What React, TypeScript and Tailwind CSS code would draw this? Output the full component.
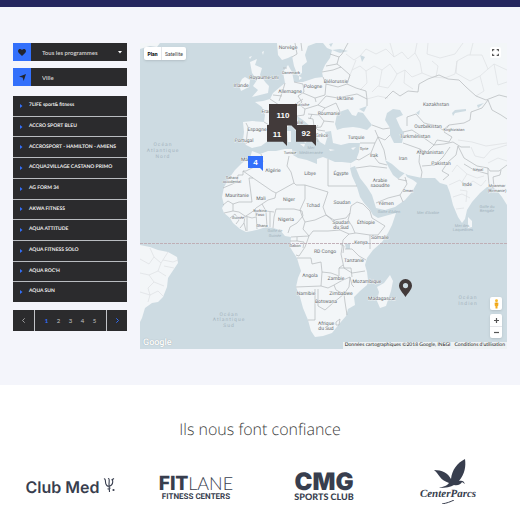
import type { ReactNode } from "react";

const clubs = [
  "7LIFE sport& fitness",
  "ACCRO SPORT BLEU",
  "ACCROSPORT - HAMILTON - AMIENS",
  "ACQUA2VILLAGE CASTANO PRIMO",
  "AG FORM 34",
  "AKWA FITNESS",
  "AQUA ATTITUDE",
  "AQUA FITNESS SOLO",
  "AQUA ROC'H",
  "AQUA SUN",
];

const MAP = { x: 140, y: 43, w: 367, h: 306 };

const land = [
  // Africa
  "M252 151 250 158 242 163 235 170 230 177 224 187 222 197 224 205 222 208 224 213 230 218 233 223 240 229 246 232 252 231 260 229 266 227 273 228 280 230 285 236 291 237 290 247 293 252 297 258 299 265 301 271 298 278 296 287 300 297 303 308 308 320 311 331 315 337 323 336 332 333 340 323 346 316 348 309 355 305 354 297 360 291 367 285 368 280 367 272 365 265 367 258 373 250 382 242 388 233 392 225 396 213 385 216 378 218 373 215 370 210 364 203 360 197 357 187 352 176 350 168 351 163 342 162 335 162 328 159 323 157 317 159 317 164 307 160 298 158 293 155 292 149 285 149 276 151 268 151 260 154Z",
  // Eurasia
  "M507 43 332 43 323 43 327 48 332 50 330 58 325 65 322 72 323 77 315 78 303 82 294 82 292 72 288 65 283 72 285 83 280 87 273 93 270 99 263 101 255 102 262 107 265 115 264 122 252 121 243 122 244 132 243 140 246 145 252 148 261 146 268 141 271 134 278 129 285 128 291 125 295 130 301 136 305 143 309 140 305 133 298 123 297 116 303 120 310 126 315 134 320 142 325 145 327 138 325 132 331 131 333 143 341 145 349 143 360 143 359 152 356 160 351 163 350 168 355 166 360 178 367 187 372 195 376 208 385 210 395 207 405 200 412 192 417 183 413 180 407 177 405 173 398 179 393 175 389 168 385 160 392 164 400 171 408 175 422 178 435 178 440 183 447 185 450 193 453 205 458 217 462 223 465 219 467 210 472 202 480 193 487 187 493 187 498 192 502 197 507 205Z",
  // Scandinavia
  "M277 43 278 55 282 60 288 58 292 56 294 66 298 76 302 73 302 66 307 62 305 55 308 46 316 43Z",
  // Great Britain, Ireland, Iceland
  "M250 62 257 59 255 65 262 68 260 75 266 83 269 86 268 93 260 95 252 97 258 90 253 86 257 80 252 73Z",
  "M245 77 250 80 249 87 241 91 239 85 242 79Z",
  "M140 43H160L157 47 150 46 140 49Z",
  // South America
  "M140 245 150 247 158 250 168 252 177 257 178 263 172 272 168 278 167 287 163 297 158 302 152 303 145 308 142 318 140 322Z",
  // Madagascar, Sri Lanka and smaller islands
  "M390 275 393 281 391 291 386 306 380 308 377 301 379 292 377 287 384 283Z",
  "M468 217 472 221 472 227 468 228Z",
  "M287 131H291V142H288ZM300 144 305 144 304 147ZM329 149 335 150 330 151ZM351 148 356 147 353 150ZM299 76 302 78 299 80ZM249 57 252 56 250 59ZM262 52 264 51 263 55Z",
];

const water = [
  "M335 124 337 114 342 111 348 109 352 115 356 116 358 112 363 113 372 125 367 130 360 128 353 127 343 128 337 130Z",
  "M359 109 367 106 364 112Z",
  "M387 113 393 109 400 110 403 115 396 118 400 127 404 133 402 143 394 143 390 135 390 128 385 120Z",
  "M452 113 455 110 466 109 466 111 455 113 453 116ZM477 105 484 103 478 108ZM416 113 420 110 419 115ZM345 244 350 243 350 249 346 249Z",
  "M332 50 340 49 348 51 340 53ZM329 44 333 43 331 47ZM360 55 365 57 362 62Z",
];

const borders = [
  // North and west Africa
  "M261 154 263 162 256 166 246 171 243 171 243 175 238 175 237 182 223 188M243 171 253 178 272 191 276 193 294 183 291 172 287 166 289 156M294 183 296 185 305 185 328 192M328 159V186H357M328 192 325 201 323 207 326 215M305 185 305 199 300 210 302 216",
  "M253 178H249L252 202H239L233 204 228 201 223 205M276 193 275 198 268 200 262 204 256 208 252 212 246 216M276 209 284 209 294 209 302 211 303 216 297 223 290 227 288 233M276 209 274 217 273 228M262 204 266 211 274 212M256 212 266 211M256 212 257 229M266 212 267 227M270 212V227M240 228 244 223 245 216 239 212 233 211 224 213M245 216 252 218 256 217M244 223 246 231M233 211 233 204M230 218 235 214 239 220 236 224M247 217 247 231",
  // Central and east Africa
  "M302 216 305 222 315 220 326 215 331 219 340 230 349 234 343 240 342 248 341 254M305 222 303 229 309 236 313 231 328 231 340 230M326 215 334 220 346 218 350 213 351 206 357 202 363 204 370 211 372 218 385 226 378 235 370 235 363 234 356 233 349 234M350 213 348 220 352 226 355 233M370 235V249M309 236 305 247 299 256 296 255M309 236 291 237M290 241H297V237M297 241 304 242 303 248M352 249 359 256 366 260M341 254 344 268 352 273 365 271M352 249H345M340 244 344 246 343 253M297 258 311 258 312 264 321 262 322 272 331 273 339 276 339 268 343 265M322 272 321 286 296 287M321 286 328 288 334 285 341 281 350 277 352 285 354 287M339 268 351 268 352 277M334 285 336 290 344 294 349 287 350 277M344 294 345 302 347 315M315 289V320L308 320M318 289 318 306 325 310 333 303 344 294M336 322 340 319 339 325 336 325Z",
  // Europe
  "M264 122 276 129M246 123 248 127 246 144M270 99 279 105 282 114 280 122 282 128M273 95 282 96M285 83 283 90 279 101M294 82 303 84 304 92 298 96 302 102 295 108 285 108M303 93 315 98 325 95 326 84 323 77M303 99 297 103 305 109 318 105 326 96M315 98 316 102M305 109 304 115 297 116M318 105 325 108 319 115 308 114M319 115 324 121 321 127 312 128M324 121 334 122M325 108 336 103 340 112M308 118 313 119 314 126 318 130 325 131M312 114 310 119M326 84 338 87 347 84 350 75 341 67 333 70 322 72M326 66 337 64 341 67M330 54 339 57 337 64M326 96 338 98 347 96 357 94 367 99 367 106M347 84 356 88 366 91 367 99M348 43 342 54 339 57M283 68 287 68M295 43 297 54 292 57M301 43 302 51M318 125 313 132 318 142",
  // Middle East and Asia
  "M372 125 383 129 390 128M375 130 378 137 385 140 390 135M360 143 375 143 378 137M375 143 371 153 359 160 356 159M371 153 379 163 387 165M378 137 384 150 386 160M356 168 370 166 387 168M376 203 388 198 400 195 407 184 405 177M400 195 403 202M398 179 407 181M385 99 393 91 400 96 408 91 418 92 419 84 428 79 439 75 448 79 459 80 466 87 476 96 486 100 499 95 507 97",
  "M407 126 407 117 416 114 424 123 437 126 443 130 449 125 464 123 470 120 471 112 482 108 488 100M403 132 412 130 424 138 434 145 426 153 420 149 403 143M449 125 444 132 452 137 449 142 437 140 434 145 444 144 453 142M420 149 419 162 422 172 421 178M422 166 435 165 443 157 450 147M443 180 449 175 442 171 448 162 456 155 458 146M458 146 464 158 477 166 488 168 490 171 499 171 507 165M464 164 474 170 488 174 488 168M488 174 489 184M494 187 493 177 500 175 501 170M453 142 461 147 470 147M488 100 492 110 501 115 507 119",
];

const faint = [
  "M347 83 352 70 360 66 366 71 374 66 382 70 390 64 397 74 405 70 412 77 422 73 420 62 415 53 408 59 402 52 394 57 386 49 376 54 366 49 360 56M372 92 378 86 388 88 394 80 397 74M422 73 432 77 445 78 455 74 457 61 468 55 482 55 488 69 494 64 507 70M405 70 404 83 413 89M428 43 427 54 440 58 455 54 463 43M457 61 456 73 470 81 480 76 488 69M480 76 484 91 476 96M494 64 498 85 507 82M390 43 394 57M415 53 417 43M346 54 354 60 360 56M366 71 367 83 360 90M356 60 352 70M382 70 379 86M432 61 438 66 436 77M367 99 378 96 388 98M470 55 473 43",
  "M449 185 460 180 465 187 473 181 481 186 486 180M453 197 462 194 470 198M456 209 464 208M452 172 457 165 467 174 462 182M467 174 477 178 484 176M460 190 467 191 466 202M471 147 475 156 484 158 491 150 507 145M458 140 472 142 486 146 507 143M488 163 498 158 507 161",
  "M140 259 149 264 154 257 150 248M154 257 161 263 168 252M161 263 158 271 149 275 140 273M158 271 166 276M149 275 154 282 164 286M140 292 150 295 158 291 163 296M150 295 148 302M163 260 173 262 178 260M164 266 174 268M154 282 148 288 150 295",
];

type Label = [string, number, number, number?];
const countries: Label[] = [
  ["Norvège", 288, 49], ["Danemark", 291, 74, 4], ["Royaume-Uni", 264, 79], ["Irlande", 241, 87],
  ["Biélorussie", 336, 83], ["Pologne", 313, 88], ["Allemagne", 290, 93], ["Ukraine", 345, 100],
  ["Autriche", 302, 106, 4], ["Roumanie", 329, 115], ["France", 269, 113], ["Italie", 298, 124],
  ["Espagne", 257, 131], ["Portugal", 244, 142], ["Grèce", 322, 137], ["Turquie", 356, 139],
  ["Syrie", 364, 150, 4], ["Irak", 374, 157], ["Maroc", 248, 161], ["Tunisie", 290, 154, 4],
  ["Algérie", 273, 172], ["Libye", 310, 175], ["Égypte", 341, 175], ["Arabie", 380, 182],
  ["saoudite", 380, 187], ["Yémen", 386, 205], ["Oman", 408, 192, 4], ["Iran", 403, 160],
  ["Kazakhstan", 436, 106], ["Ouzbékistan", 428, 128], ["Kirghizistan", 454, 131, 4],
  ["Turkménistan", 415, 138], ["Afghanistan", 430, 154], ["Pakistan", 441, 165], ["Inde", 467, 186],
  ["Népal", 478, 171, 4], ["Myanmar", 497, 187, 4], ["(Birmanie)", 497, 192, 4],
  ["Sahara", 232, 179, 4], ["occidental", 232, 183, 4], ["Mauritanie", 237, 197], ["Mali", 261, 200],
  ["Niger", 289, 201], ["Tchad", 313, 207], ["Soudan", 342, 204], ["Burkina", 260, 212, 4],
  ["Faso", 260, 216, 4], ["Guinée", 238, 219, 4], ["Ghana", 262, 227, 4], ["Nigeria", 286, 221],
  ["Soudan", 341, 224], ["du Sud", 341, 229], ["Éthiopie", 366, 224], ["Somalie", 380, 239],
  ["Kenya", 361, 244], ["Gabon", 295, 247, 4], ["RD Congo", 325, 253], ["Tanzanie", 354, 262],
  ["Angola", 310, 277], ["Zambie", 336, 280], ["Mozambique", 367, 283], ["Namibie", 306, 295],
  ["Zimbabwe", 341, 295], ["Botswana", 326, 303], ["Afrique", 326, 325], ["du Sud", 326, 330],
  ["Madagascar", 382, 300],
];
const seas: Label[] = [
  ["Mer", 311, 149, 4], ["Méditerranée", 311, 154, 4], ["Golfe de", 275, 232, 4], ["Guinée", 275, 237, 4],
  ["Golfe d'Aden", 389, 213, 4], ["Mer d'Arabie", 428, 214, 4], ["Golfe du", 487, 208, 4],
  ["Bengale", 487, 212, 4], ["Mer des", 462, 227, 4], ["Laquedives", 463, 231, 4],
];
const oceans: Label[] = [
  ["Océan", 163, 146], ["Atlantique", 163, 152], ["Nord", 163, 158],
  ["Océan", 229, 316], ["Atlantique", 229, 321], ["Sud", 229, 327],
  ["Océan", 468, 299], ["Indien", 468, 305],
];

function WorldMap() {
  const draw = (list: Label[], kind: string) =>
    list.map(([name, x, y, size]) => (
      <text key={kind + name + x + y} x={x} y={y} fontSize={size ?? 5}>
        {name}
      </text>
    ));
  return (
    <svg
      viewBox={`${MAP.x} ${MAP.y} ${MAP.w} ${MAP.h}`}
      className="block h-full w-full bg-[#cddbe2] font-['Roboto',sans-serif]"
      role="img"
      aria-label="Carte des clubs"
    >
      {land.map((d) => <path key={d} d={d} fill="#f3f6f8" />)}
      {water.map((d) => <path key={d} d={d} fill="#cddbe2" />)}
      <g fill="none" strokeLinejoin="round">
        {faint.map((d) => <path key={d} d={d} stroke="#dcdfe2" strokeWidth=".7" />)}
        {borders.map((d) => <path key={d} d={d} stroke="#b3b7ba" strokeWidth=".7" />)}
        <path d="M140 243.500H507" stroke="#bda9b1" strokeWidth=".9" strokeDasharray="3 1" />
      </g>
      <g textAnchor="middle">
        <g fill="#696d70" stroke="#f3f6f8" strokeWidth=".8" paintOrder="stroke">{draw(countries, "c")}</g>
        <g fill="#a3b3bd">{draw(seas, "s")}</g>
        <g fill="#a6b5bf" letterSpacing="1">{draw(oceans, "o")}</g>
      </g>
    </svg>
  );
}

type PinProps = { x: number; y: number; label: string; className: string; children: ReactNode };

function Pin({ x, y, label, className, children }: PinProps) {
  return (
    <button
      type="button"
      aria-label={label}
      style={{ left: `${((x - MAP.x) / MAP.w) * 100}%`, top: `${((y - MAP.y) / MAP.h) * 100}%` }}
      className={`absolute flex justify-center font-['Liberation_Sans',Arial,sans-serif] font-bold text-white ${className}`}
    >
      {children}
    </button>
  );
}

const bubble = "[clip-path:polygon(0_0,100%_0,100%_100%,80%_80%,0_80%)]";

function MapPanel() {
  return (
    <div className="relative aspect-[367/306] min-w-0 flex-1 overflow-hidden">
      <WorldMap />

      <Pin x={269} y={104} label="110 clubs" className={`h-[27px] w-7 bg-[#423a3a] text-[8px] leading-[23px] ${bubble}`}>110</Pin>
      <Pin x={267} y={125} label="11 clubs" className={`h-[21px] w-5 bg-[#423a3a] text-[8px] leading-[19px] ${bubble}`}>11</Pin>
      <Pin x={296} y={125} label="92 clubs" className={`h-[21px] w-5 bg-[#423a3a] text-[8px] leading-[18px] ${bubble}`}>92</Pin>
      <Pin x={248} y={156} label="4 clubs" className={`h-[15px] w-[15px] bg-[#3370fb] text-[8px] leading-[14px] ${bubble}`}>4</Pin>
      <Pin x={399} y={279} label="Club" className="h-[18px] w-[13px]">
        <svg viewBox="0 0 13 18" className="h-full w-full">
          <path fillRule="evenodd" d="M6.500 0A6.500 6.500 0 0 0 0 6.500C0 10.500 4 14 6.500 18 9 14 13 10.500 13 6.500A6.500 6.500 0 0 0 6.500 0Zm0 4a2.600 2.600 0 1 1 0 5.200 2.600 2.600 0 0 1 0-5.200Z" fill="#423a3a" />
        </svg>
      </Pin>

      <div className="absolute top-1 left-1 flex h-[13px] rounded-xs bg-white font-['Roboto',sans-serif] text-[5px] leading-[14px] shadow-sm">
        <button type="button" className="w-[18px] border-r border-gray-200 font-bold text-black">Plan</button>
        <button type="button" className="w-6 text-[#454545]">Satellite</button>
      </div>

      <button type="button" aria-label="Plein écran" className="absolute top-1 right-[6px] flex size-[11px] items-center justify-center rounded-xs bg-white">
        <svg viewBox="0 0 7 7" className="size-[7px]" fill="none" stroke="#555" strokeWidth="1.100">
          <path d="M.6 2.300V.6H2.300M4.700.6H6.400V2.300M6.400 4.700V6.400H4.700M2.300 6.400H.6V4.700" />
        </svg>
      </button>

      <div className="absolute right-[5px] bottom-[11px] flex w-3 flex-col gap-1">
        <button type="button" aria-label="Street View" className="flex h-[13px] items-center justify-center rounded-xs bg-white shadow-sm">
          <svg viewBox="0 0 7 11" className="h-[10px] w-[7px]">
            <circle cx="3.500" cy="2" r="1.600" fill="#f6b92c" />
            <path d="M1.400 4H5.600L5.400 7.300 4.600 8V10.500H2.400V8L1.600 7.300Z" fill="#f3ac1f" />
            <path d="M2 4.200H5L3.500 5Z" fill="#c98412" />
          </svg>
        </button>
        <div className="flex flex-col rounded-xs bg-white shadow-sm">
          <button type="button" aria-label="Zoom avant" className="flex h-3 items-center justify-center">
            <svg viewBox="0 0 5 5" className="size-[5px]"><path d="M0 2.500H5M2.500 0V5" stroke="#555" strokeWidth="1.200" /></svg>
          </button>
          <button type="button" aria-label="Zoom arrière" className="flex h-3 items-center justify-center border-t border-gray-200">
            <svg viewBox="0 0 5 5" className="size-[5px]"><path d="M0 2.500H5" stroke="#555" strokeWidth="1.200" /></svg>
          </button>
        </div>
      </div>

      <span className="absolute bottom-0 left-[3px] font-['Roboto',sans-serif] text-[9px] leading-3 font-medium text-white [text-shadow:0_0_1px_#8a979e]">Google</span>
      <div className="absolute right-0 bottom-0 flex h-[7px] gap-1 bg-[#eef2f4] px-[2px] font-['Lato',sans-serif] text-[5px] leading-[7px] whitespace-nowrap text-[#222]">
        <span>Données cartographiques ©2018 Google, INEGI</span>
        <a href="#conditions">Conditions d'utilisation</a>
      </div>
    </div>
  );
}

function Filters() {
  return (
    <form className="flex flex-col gap-[7px] text-[6px] font-semibold text-[#d6d6d6]">
      <div className="relative flex h-[18px] bg-[#2b2b2d]">
        <label htmlFor="programme" aria-label="Programme" className="flex w-[18px] items-center justify-center bg-[#3370fb]">
          <svg viewBox="0 0 16 14" className="h-[7px] w-2"><path d="M8 14 1.300 7.300C-.6 5.200-.3 2.200 1.500.9 3.700-.7 6.500 0 8 2.200 9.500 0 12.300-.7 14.500.9c1.800 1.300 2.100 4.300.2 6.400Z" fill="#22252e" /></svg>
        </label>
        <select id="programme" className="min-w-0 flex-1 appearance-none bg-transparent pl-[11px] outline-none">
          <option>Tous les programmes</option>
        </select>
        <svg viewBox="0 0 4 3" className="pointer-events-none absolute top-2 right-[5px] h-[3px] w-1"><path d="M0 0H4L2 2.500Z" fill="#fff" /></svg>
      </div>
      <div className="flex h-[18px] bg-[#2b2b2d]">
        <label htmlFor="ville" aria-label="Ville" className="flex w-[18px] items-center justify-center bg-[#3370fb]">
          <svg viewBox="0 0 12 12" className="size-[7px]"><path d="M12 0 8 12 6.200 6.200 0 4.800Z" fill="#22252e" /></svg>
        </label>
        <input id="ville" placeholder="Ville" className="min-w-0 flex-1 bg-transparent pl-[11px] outline-none placeholder:text-[#d6d6d6]" />
      </div>
    </form>
  );
}

function ClubList() {
  return (
    <ul className="mt-[10px] flex h-[206px] flex-col gap-px bg-[#b9bcc0] text-[5px] font-bold text-[#f2f2f2]">
      {clubs.map((club) => (
        <li key={club} className="flex flex-1 bg-[#2b2b2d]">
          <a href="#club" className="flex flex-1 items-center gap-[6px] pl-[7px] whitespace-nowrap">
            <svg viewBox="0 0 3 4" className="h-1 w-[3px]"><path d="M0 0 2.500 2 0 4Z" fill="#3370fb" /></svg>
            {club}
          </a>
        </li>
      ))}
    </ul>
  );
}

function Pagination() {
  return (
    <nav aria-label="Pagination" className="mt-2 flex h-[21px] gap-px bg-[#c3c5c9] text-[6px] text-[#c4c4c4]">
      <button type="button" aria-label="Page précédente" className="flex w-[21px] items-center justify-center bg-[#2b2b2d]">
        <svg viewBox="0 0 3 5" className="h-[5px] w-[3px]"><path d="M2.700.3.500 2.500 2.700 4.700" fill="none" stroke="#aaa" strokeWidth=".9" /></svg>
      </button>
      <div className="flex flex-1 items-center justify-center bg-[#2b2b2d]">
        {[1, 2, 3, 4, 5].map((n) => (
          <button type="button" key={n} className={n === 1 ? "w-3 font-bold text-[#3370fb]" : "w-3"}>{n}</button>
        ))}
      </div>
      <button type="button" aria-label="Page suivante" className="flex w-5 items-center justify-center bg-[#2b2b2d]">
        <svg viewBox="0 0 3 5" className="h-[5px] w-[3px]"><path d="M.3.300 2.500 2.500.3 4.700" fill="none" stroke="#3370fb" strokeWidth="1" /></svg>
      </button>
    </nav>
  );
}

function Partners() {
  return (
    <section className="bg-white pt-8 text-[#383e4e]">
      <h2 className="text-center text-base leading-6 font-light text-[#3f3f3f]">Ils nous font confiance</h2>
      <ul className="mt-[14px] grid grid-cols-4 px-1">
        <li className="flex h-16 items-center justify-center gap-[3px] pl-1">
          <span className="font-['Inter',sans-serif] text-base leading-5 font-semibold whitespace-nowrap">Club Med</span>
          <svg viewBox="0 0 12 16" className="mb-1 h-4 w-3" fill="none" stroke="#383e4e" strokeWidth="1.100">
            <path d="M1 2C2 1.500 2.500 3 2.500 5c0 3 2 5 4.500 4 2.500-1 3-4 2.500-6.500M5 1.500C6.500 1 6.300 4 6 7L6.500 15M4.500 12 7.500 11M8.500 3 11 1.500" />
            <circle cx="10.500" cy="13" r="1.100" fill="#383e4e" stroke="none" />
          </svg>
        </li>
        <li className="flex h-16 flex-col items-center justify-center">
          <span className="flex items-baseline leading-[18px]">
            <b className="font-['Roboto',sans-serif] text-xl leading-[18px] font-black">FIT</b>
            <span className="font-['Lato',sans-serif] text-lg leading-[18px] font-light">LANE</span>
          </span>
          <span className="font-['Roboto',sans-serif] text-[8px] leading-[9px] font-bold whitespace-nowrap">FITNESS CENTERS</span>
        </li>
        <li className="flex h-16 flex-col items-center justify-center">
          <span className="font-['Inter',sans-serif] text-2xl leading-5 font-black">CMG</span>
          <span className="font-['Lato',sans-serif] text-[9px] leading-[10px] font-black whitespace-nowrap">SPORTS CLUB</span>
        </li>
        <li className="flex h-16 flex-col items-center pt-1 pr-2">
          <svg viewBox="-4 0 36 29" className="h-[29px] w-9" fill="#383e4e">
            <path d="M31 0C23 4 18 11 17 20 14 14 8 11 0 11 3 13 4 16 6 18 8 21 11 22 15 24 13 27 8 28 5 29 12 29 17 28 20 26 24 27 27 25 28 23L31 25C30 22 28 21 25 22 31 15 32 7 31 0Z" />
          </svg>
          <span className="font-['Liberation_Serif',serif] text-[11px] leading-3 font-bold italic">CenterParcs</span>
          <svg viewBox="0 0 12 4" className="h-1 w-3"><path d="M0 4C5 3 8 2 12 0" fill="none" stroke="#383e4e" /></svg>
        </li>
      </ul>
    </section>
  );
}

export default function App() {
  return (
    <div className="min-h-screen bg-white font-['Open_Sans','Noto_Sans',sans-serif] [text-rendering:geometricPrecision]">
      <header className="h-[7px] bg-[#25275f]" />
      <main>
        <section className="flex items-start gap-[13px] bg-[#f4f5fb] px-[13px] pt-9 pb-9">
          <aside className="w-[114px] shrink-0 font-['Lato',sans-serif]">
            <Filters />
            <ClubList />
            <Pagination />
          </aside>
          <MapPanel />
        </section>
        <Partners />
      </main>
    </div>
  );
}
